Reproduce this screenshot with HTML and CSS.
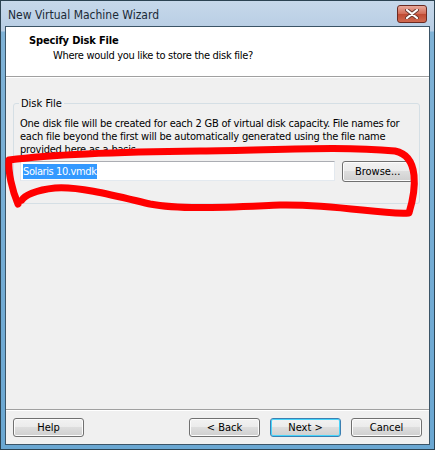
FILE: index.html
```html
<!DOCTYPE html>
<html>
<head>
<meta charset="utf-8">
<link rel="stylesheet" href="styles.css">
</head>
<body>
<div class="window">
  <div class="titlebar">
    <span class="title">New Virtual Machine Wizard</span>
    <span class="close"><svg width="14" height="10" viewBox="0 0 14 10"><path d="M2 1 L12 9 M12 1 L2 9" stroke="#6b3a34" stroke-width="4" stroke-linecap="round"/><path d="M2 1 L12 9 M12 1 L2 9" stroke="#fff" stroke-width="2.2" stroke-linecap="round"/></svg></span>
  </div>
  <div class="client">
    <div class="header">
      <div class="h-title">Specify Disk File</div>
      <div class="h-sub">Where would you like to store the disk file?</div>
    </div>
    <div class="body">
      <div class="group">
        <div class="legend">Disk File</div>
        <p class="desc">One disk file will be created for each 2 GB of virtual disk capacity. File names for each file beyond the first will be automatically generated using the file name provided here as a basis.</p>
        <div class="row">
          <div class="input"><span class="sel">Solaris 10.vmdk</span></div>
          <div class="btn browse">Browse...</div>
        </div>
      </div>
    </div>
    <div class="footer">
      <div class="btn">Help</div>
      <div class="spacer"></div>
      <div class="btn">&lt; Back</div>
      <div class="btn default">Next &gt;</div>
      <div class="btn">Cancel</div>
    </div>
  </div>
  <svg class="scribble" width="435" height="450" viewBox="0 0 435 450">
    <path d="M18 204 C 12 190, 8 172, 9 160 C 40 156, 100 152, 200 151 C 280 150, 340 146, 395 151 C 420 156, 416 190, 409 213 C 380 215, 340 204, 280 205 C 230 207, 180 210, 150 204 C 120 197, 80 186, 55 188 C 35 190, 24 196, 22 200" fill="none" stroke="#ff0000" stroke-width="7" stroke-linecap="round" stroke-linejoin="round"/>
  </svg>
</div>
</body>
</html>
```
FILE: styles.css
```css
html, body {
  margin: 0;
  padding: 0;
  background: #9fb6cc;
}
.window {
  position: relative;
  width: 435px;
  height: 450px;
  box-sizing: border-box;
  border: 1px solid #2c4352;
  background: linear-gradient(#c6d8ea, #b7cde4 30px, #7fb2d6 31px, #6aa7d2);
  display: flex;
  flex-direction: column;
  padding: 0 4px 4px 4px;
  font-family: "DejaVu Sans Condensed", "DejaVu Sans", sans-serif;
  font-stretch: condensed;
  font-size: 11px;
  color: #000;
}
.titlebar {
  height: 25px;
  display: flex;
  align-items: center;
  position: relative;
}
.title {
  font-size: 12px;
  color: #1b2a36;
  padding-left: 3px;
  padding-top: 2px;
}
.close {
  position: absolute;
  right: 3px;
  top: 4px;
  width: 30px;
  height: 18px;
  box-sizing: border-box;
  border: 1px solid #6b2a22;
  border-radius: 3px;
  background: linear-gradient(#e9a99b, #d26a55 50%, #c04a33 51%, #d06a50);
  display: flex;
  align-items: center;
  justify-content: center;
}
.client {
  flex: 1;
  background: #f0f0f0;
  border: 1px solid #3b5466;
  display: flex;
  flex-direction: column;
}
.header {
  background: #fff;
  height: 50px;
  border-bottom: 1px solid #a0a0a0;
  box-shadow: 0 1px 0 #fff;
  padding-left: 23px;
  box-sizing: border-box;
  padding-top: 7px;
}
.h-title {
  font-weight: bold;
  font-size: 11px;
  letter-spacing: -0.15px;
}
.h-sub {
  padding-left: 24px;
  margin-top: 2px;
  letter-spacing: -0.3px;
}
.body {
  flex: 1;
  padding: 26px 9px 0 7px;
}
.group {
  position: relative;
  border: 1px solid #d5dfe5;
  border-radius: 3px;
  height: 86px;
  padding: 13px 6px 0 6px;
}
.legend {
  position: absolute;
  left: 5px;
  top: -7px;
  background: #f0f0f0;
  padding: 0 2px;
}
.desc {
  margin: 0;
  line-height: 13px;
  letter-spacing: -0.22px;
}
.row {
  display: flex;
  margin-top: 5px;
  gap: 7px;
}
.input {
  width: 316px;
  height: 20px;
  box-sizing: border-box;
  border: 1px solid #abadb3;
  border-color: #abadb3 #e3e9ef #e3e9ef #e2e3ea;
  background: #fff;
  padding: 2px 2px 0 2px;
  letter-spacing: -0.4px;
}
.sel {
  background: #3399ff;
  color: #fff;
  line-height: 15px;
  display: inline-block;
}
.btn {
  width: 71px;
  height: 19px;
  box-sizing: border-box;
  border: 1px solid #707070;
  border-radius: 3px;
  background: linear-gradient(#f2f2f2, #ebebeb 50%, #dddddd 50%, #cfcfcf);
  box-shadow: inset 0 0 0 1px #fcfcfc;
  display: flex;
  align-items: center;
  justify-content: center;
}
.browse {
  height: 21px;
}
.default {
  border-color: #3c7fb1;
  box-shadow: inset 0 0 0 1px #48d5fb;
}
.footer {
  border-top: 1px solid #a0a0a0;
  box-shadow: inset 0 1px 0 #fff;
  height: 35px;
  box-sizing: border-box;
  display: flex;
  align-items: center;
  padding: 0 7px;
  gap: 10px;
}
.spacer {
  flex: 1;
}
.scribble {
  position: absolute;
  left: -1px;
  top: -1px;
  pointer-events: none;
}
```
